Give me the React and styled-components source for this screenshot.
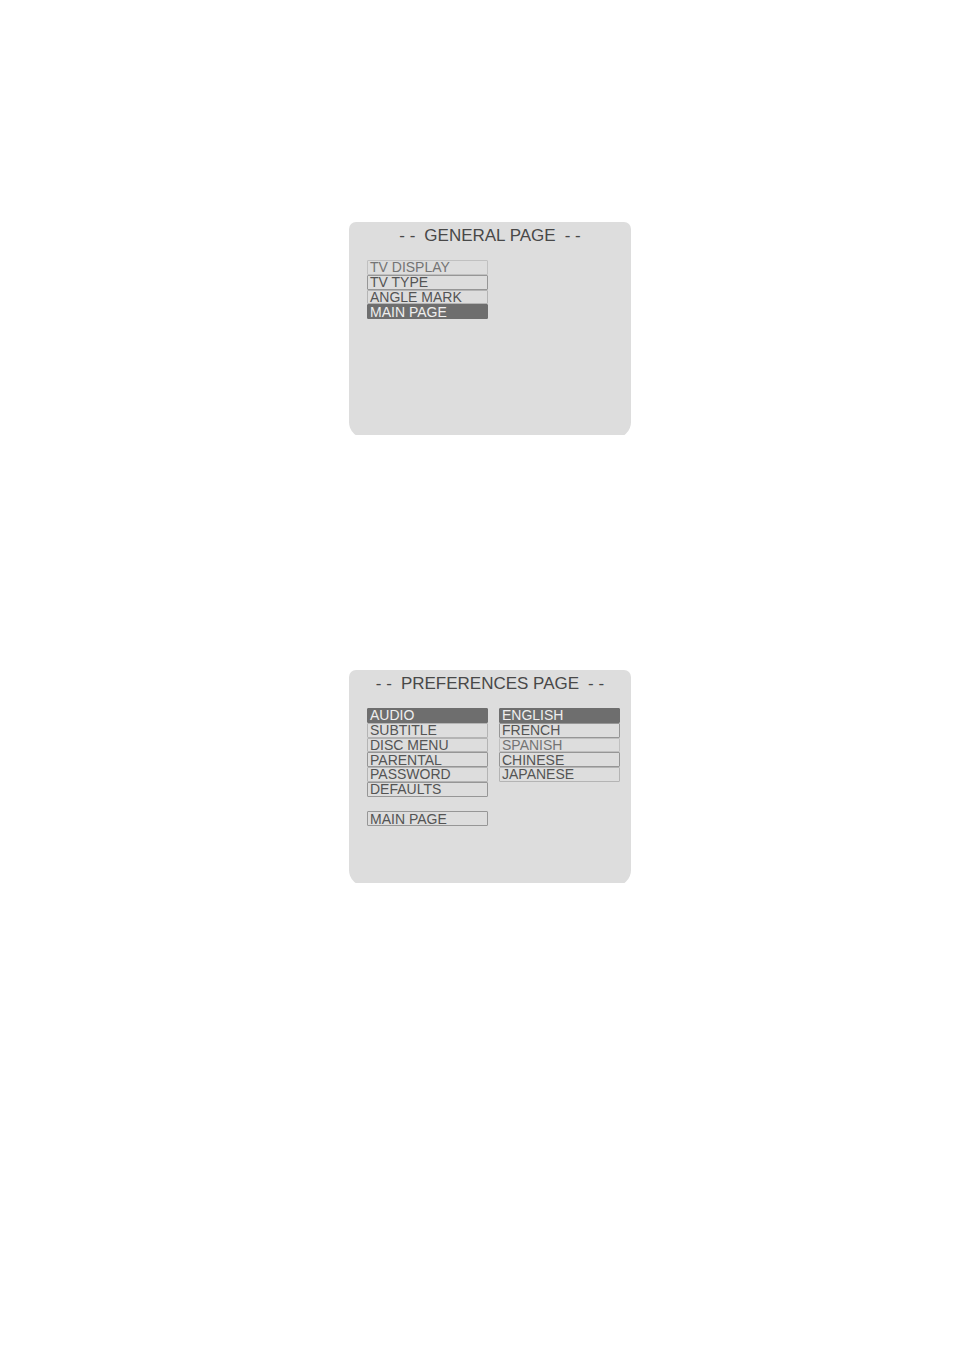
import React from 'react';
import styled, { createGlobalStyle } from 'styled-components';

const generalMenu = [
    { label: 'TV DISPLAY', tone: 'faint' },
    { label: 'TV TYPE', tone: 'strong' },
    { label: 'ANGLE MARK' },
    { label: 'MAIN PAGE', selected: true },
];

const preferencesMenu = [
    { label: 'AUDIO', selected: true },
    { label: 'SUBTITLE' },
    { label: 'DISC MENU' },
    { label: 'PARENTAL', tone: 'strong' },
    { label: 'PASSWORD' },
    { label: 'DEFAULTS', tone: 'strong' },
    { label: 'MAIN PAGE', tone: 'strong', slot: 8 },
];

const audioOptions = [
    { label: 'ENGLISH', selected: true },
    { label: 'FRENCH', tone: 'strong' },
    { label: 'SPANISH', tone: 'faint' },
    { label: 'CHINESE', tone: 'strong' },
    { label: 'JAPANESE' },
];

const MenuList = ({ items, label }) => (
    <Menu aria-label={label}>
        {items.map((item) => (
            <MenuRow key={item.label} $slot={item.slot}>
                <MenuButton type="button" $tone={item.tone} $selected={item.selected}>{item.label}</MenuButton>
            </MenuRow>
        ))}
    </Menu>
);

const SetupScreen = ({ title, menus }) => (
    <Screen>
        <TitleBar>
            <span>- -</span>
            <Title>{title}</Title>
            <span>- -</span>
        </TitleBar>
        <Menus>
            {menus.map((menu) => <MenuList key={menu.label} {...menu} />)}
        </Menus>
    </Screen>
);

const App = () => (
    <>
        <GlobalStyle />
        <Page>
            <SetupScreen title="GENERAL PAGE" menus={[{ label: 'General', items: generalMenu }]} />
            <SetupScreen
                title="PREFERENCES PAGE"
                menus={[
                    { label: 'Preferences', items: preferencesMenu },
                    { label: 'Audio language', items: audioOptions },
                ]}
            />
        </Page>
    </>
);

const borderTones = {
    faint: '#c0c0c0',
    strong: '#969696',
};

const GlobalStyle = createGlobalStyle`
    * {
        box-sizing: border-box;
    }

    body {
        margin: 0;
        background: #fff;
        font-family: 'Liberation Sans', Arial, sans-serif;
    }
`

const Page = styled.main`
    display: flex;
    flex-direction: column;
    align-items: center;
    gap: 232px;
    min-height: 100vh;
    padding: 222px 0 222px 26px;
`

const Screen = styled.section`
    width: 100%;
    max-width: 282px;
    min-height: 216px;
    padding: 4px 11px 0 18px;
    background: #ddd;
    border-radius: 7px 7px 16px 16px;
    clip-path: inset(0 0 3px 0);
`

const TitleBar = styled.header`
    display: flex;
    justify-content: center;
    gap: 9px;
    padding-right: 7px;
    color: #484848;
    font-size: 17px;
    line-height: 20px;
`

const Title = styled.h1`
    margin: 0;
    font-size: inherit;
    font-weight: 400;
`

const Menus = styled.div`
    display: grid;
    grid-template-columns: 1fr 1fr;
    gap: 11px;
    padding-top: 14px;
`

const Menu = styled.ul`
    display: grid;
    grid-template-rows: repeat(8, 1fr);
    height: 118px;
    margin: 0;
    padding: 0;
    list-style: none;
`

const MenuRow = styled.li`
    display: flex;
    min-height: 0;
    grid-row: ${(props) => props.$slot || 'auto'};
`

const MenuButton = styled.button`
    flex: 1;
    min-height: 0;
    padding: 0 2px;
    border: 1px solid ${(props) => (props.$selected ? '#6e6e6e' : borderTones[props.$tone] || '#b4b4b4')};
    border-radius: 1px;
    background: ${(props) => (props.$selected ? '#6e6e6e' : 'transparent')};
    color: ${(props) => (props.$selected ? '#eee' : props.$tone === 'faint' ? '#747474' : '#545454')};
    font-family: inherit;
    font-size: 14px;
    line-height: 12px;
    text-align: left;
    cursor: pointer;
`

export default App;
